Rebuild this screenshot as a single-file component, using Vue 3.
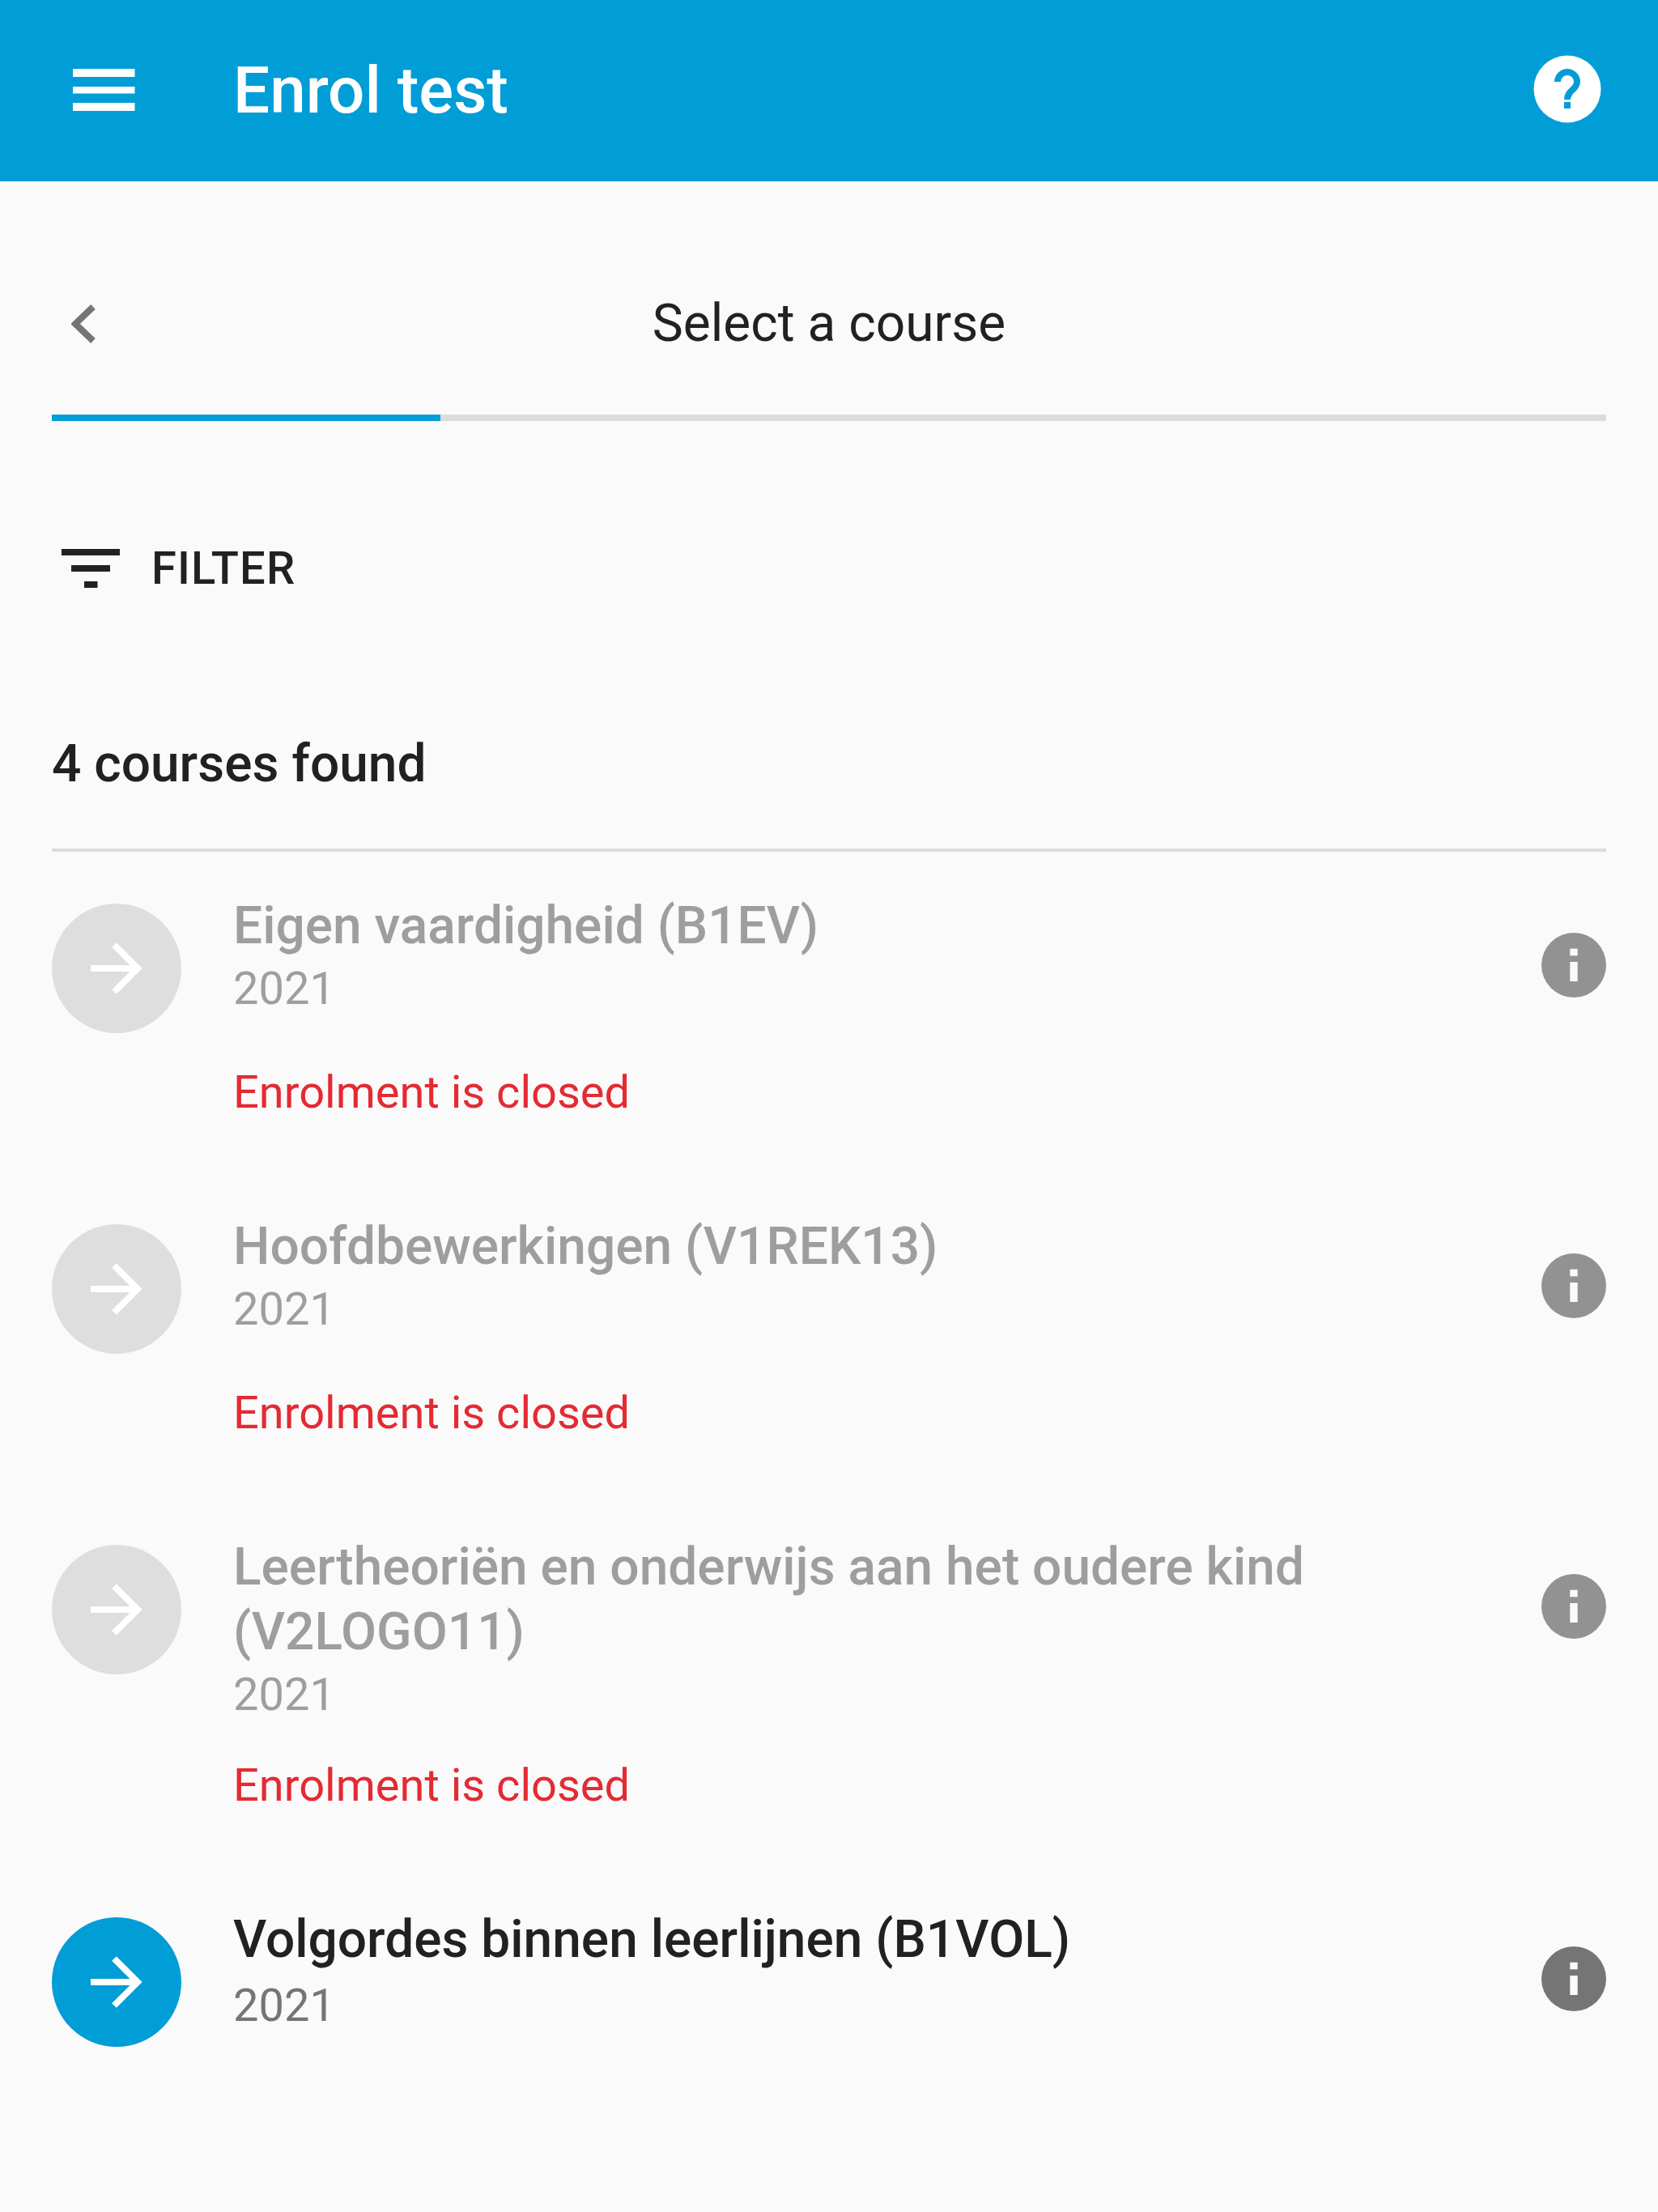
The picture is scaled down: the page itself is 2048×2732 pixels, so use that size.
<script setup>
const courses = [
  { id: 1, lines: ['Eigen vaardigheid (B1EV)'], year: 2021, closed: true },
  { id: 2, lines: ['Hoofdbewerkingen (V1REK13)'], year: 2021, closed: true },
  { id: 3, lines: ['Leertheoriën en onderwijs aan het oudere kind', '(V2LOGO11)'], year: 2021, closed: true },
  { id: 4, lines: ['Volgordes binnen leerlijnen (B1VOL)'], year: 2021, closed: false },
]
</script>

<template>
  <div class="page">
    <header class="appbar">
      <svg class="menu" width="80" height="52" viewBox="0 0 80 52">
        <rect x="0" y="0" width="76.5" height="10" fill="#fff" />
        <rect x="0" y="22" width="76.5" height="8.5" fill="#fff" />
        <rect x="0" y="42" width="76.5" height="10" fill="#fff" />
      </svg>
      <h1 class="app-title">Enrol test</h1>
      <svg class="help" width="84" height="84" viewBox="0 0 84 84">
        <circle cx="42" cy="42" r="41.5" fill="#fff" />
        <path d="M30 33a12 12 0 0 1 24 0c0 10-12 10-12 22" fill="none" stroke="#019dd7" stroke-width="8" />
        <rect x="38" y="58" width="8" height="8" fill="#019dd7" />
      </svg>
    </header>

    <main class="content">
      <div class="step-head">
        <svg class="back" width="30" height="48" viewBox="0 0 30 48">
          <path d="M27 3 L5 24 L27 45" fill="none" stroke="#757575" stroke-width="8" />
        </svg>
        <div class="step-title">Select a course</div>
      </div>
      <div class="progress"><div class="progress-fill"></div></div>

      <div class="filter">
        <svg width="72" height="48" viewBox="0 0 72 48">
          <rect x="0" y="0" width="72" height="8" fill="#212121" />
          <rect x="12" y="20" width="48" height="8" fill="#212121" />
          <rect x="28" y="40" width="16.5" height="8" fill="#212121" />
        </svg>
        <span>FILTER</span>
      </div>

      <div class="found">4 courses found</div>

      <ul class="list">
        <li v-for="c in courses" :key="c.id" class="course" :class="{ closed: c.closed }">
          <div class="go">
            <svg width="66" height="66" viewBox="0 0 66 66">
              <path d="M1 33 H59 M30 4 L59 33 L30 62" fill="none" stroke="#fff" stroke-width="8" />
            </svg>
          </div>
          <div class="body">
            <div class="text">
              <div class="name"><div v-for="l in c.lines" :key="l">{{ l }}</div></div>
              <div class="year">{{ c.year }}</div>
            </div>
            <div v-if="c.closed" class="status">Enrolment is closed</div>
          </div>
          <svg class="info" width="80" height="80" viewBox="0 0 80 80">
            <circle cx="40" cy="40" r="40" class="info-bg" />
            <rect x="35.3" y="19.7" width="9.4" height="8.6" fill="#fafafa" />
            <rect x="35.3" y="36" width="9.4" height="24" fill="#fafafa" />
          </svg>
        </li>
      </ul>
    </main>
  </div>
</template>

<style scoped>
.page {
  width: 2048px;
  height: 2732px;
  background: #fafafa;
  font-family: Roboto, sans-serif;
  color: #212121;
  overflow: hidden;
}
.appbar {
  height: 224px;
  background: #019dd7;
  display: flex;
  align-items: center;
  box-sizing: border-box;
  padding: 0 70px 0 90px;
}
.menu { flex: none; margin-top: -2px; }
.app-title {
  margin: 0 0 0 118px;
  flex: 1;
  color: #fff;
  font-size: 80px;
  font-weight: 500;
}
.help { margin-top: -4px; }
.content { padding: 0 64px; }
.step-head {
  height: 288px;
  box-sizing: border-box;
  padding-top: 62px;
  display: grid;
  grid-template-columns: 1fr auto 1fr;
  align-items: center;
}
.back { margin-left: 24px; margin-top: 2px; }
.step-title { font-size: 64px; }
.progress { height: 8px; background: #dcdcdc; }
.progress-fill { width: 480px; height: 8px; background: #019dd7; }
.filter {
  display: flex;
  align-items: center;
  gap: 39px;
  padding: 149px 0 0 12px;
  font-size: 56px;
  font-weight: 500;
  letter-spacing: 1.2px;
  line-height: 66px;
}
.found {
  margin-top: 171px;
  font-size: 64px;
  font-weight: 500;
  line-height: 76px;
  padding-bottom: 66px;
  border-bottom: 4px solid #dcdcdc;
}
.list { list-style: none; margin: 0; padding: 2px 0 0; }
.course {
  display: flex;
  align-items: flex-start;
  padding-top: 62px;
}
.go {
  flex: none;
  width: 160px;
  height: 160px;
  border-radius: 50%;
  background: #019dd7;
  display: flex;
  align-items: center;
  justify-content: center;
}
.closed .go { background: #dedede; }
.body { flex: 1; margin-left: 64px; margin-top: -12px; }
.text { min-height: 170px; }
.name { font-size: 64px; font-weight: 500; line-height: 80px; }
.closed .name { color: #9e9e9e; }
.year { font-size: 56px; line-height: 74px; color: #757575; margin-top: 4px; }
.closed .year { color: #9e9e9e; margin-top: 0; }
.status { font-size: 56px; line-height: 66px; color: #e42a33; margin-top: 42px; padding-bottom: 68px; }
.info { flex: none; margin-top: 36px; }
.info-bg { fill: #757575; }
.closed .info-bg { fill: #929292; }
</style>

<style>
html, body { background: #fafafa; }
</style>
